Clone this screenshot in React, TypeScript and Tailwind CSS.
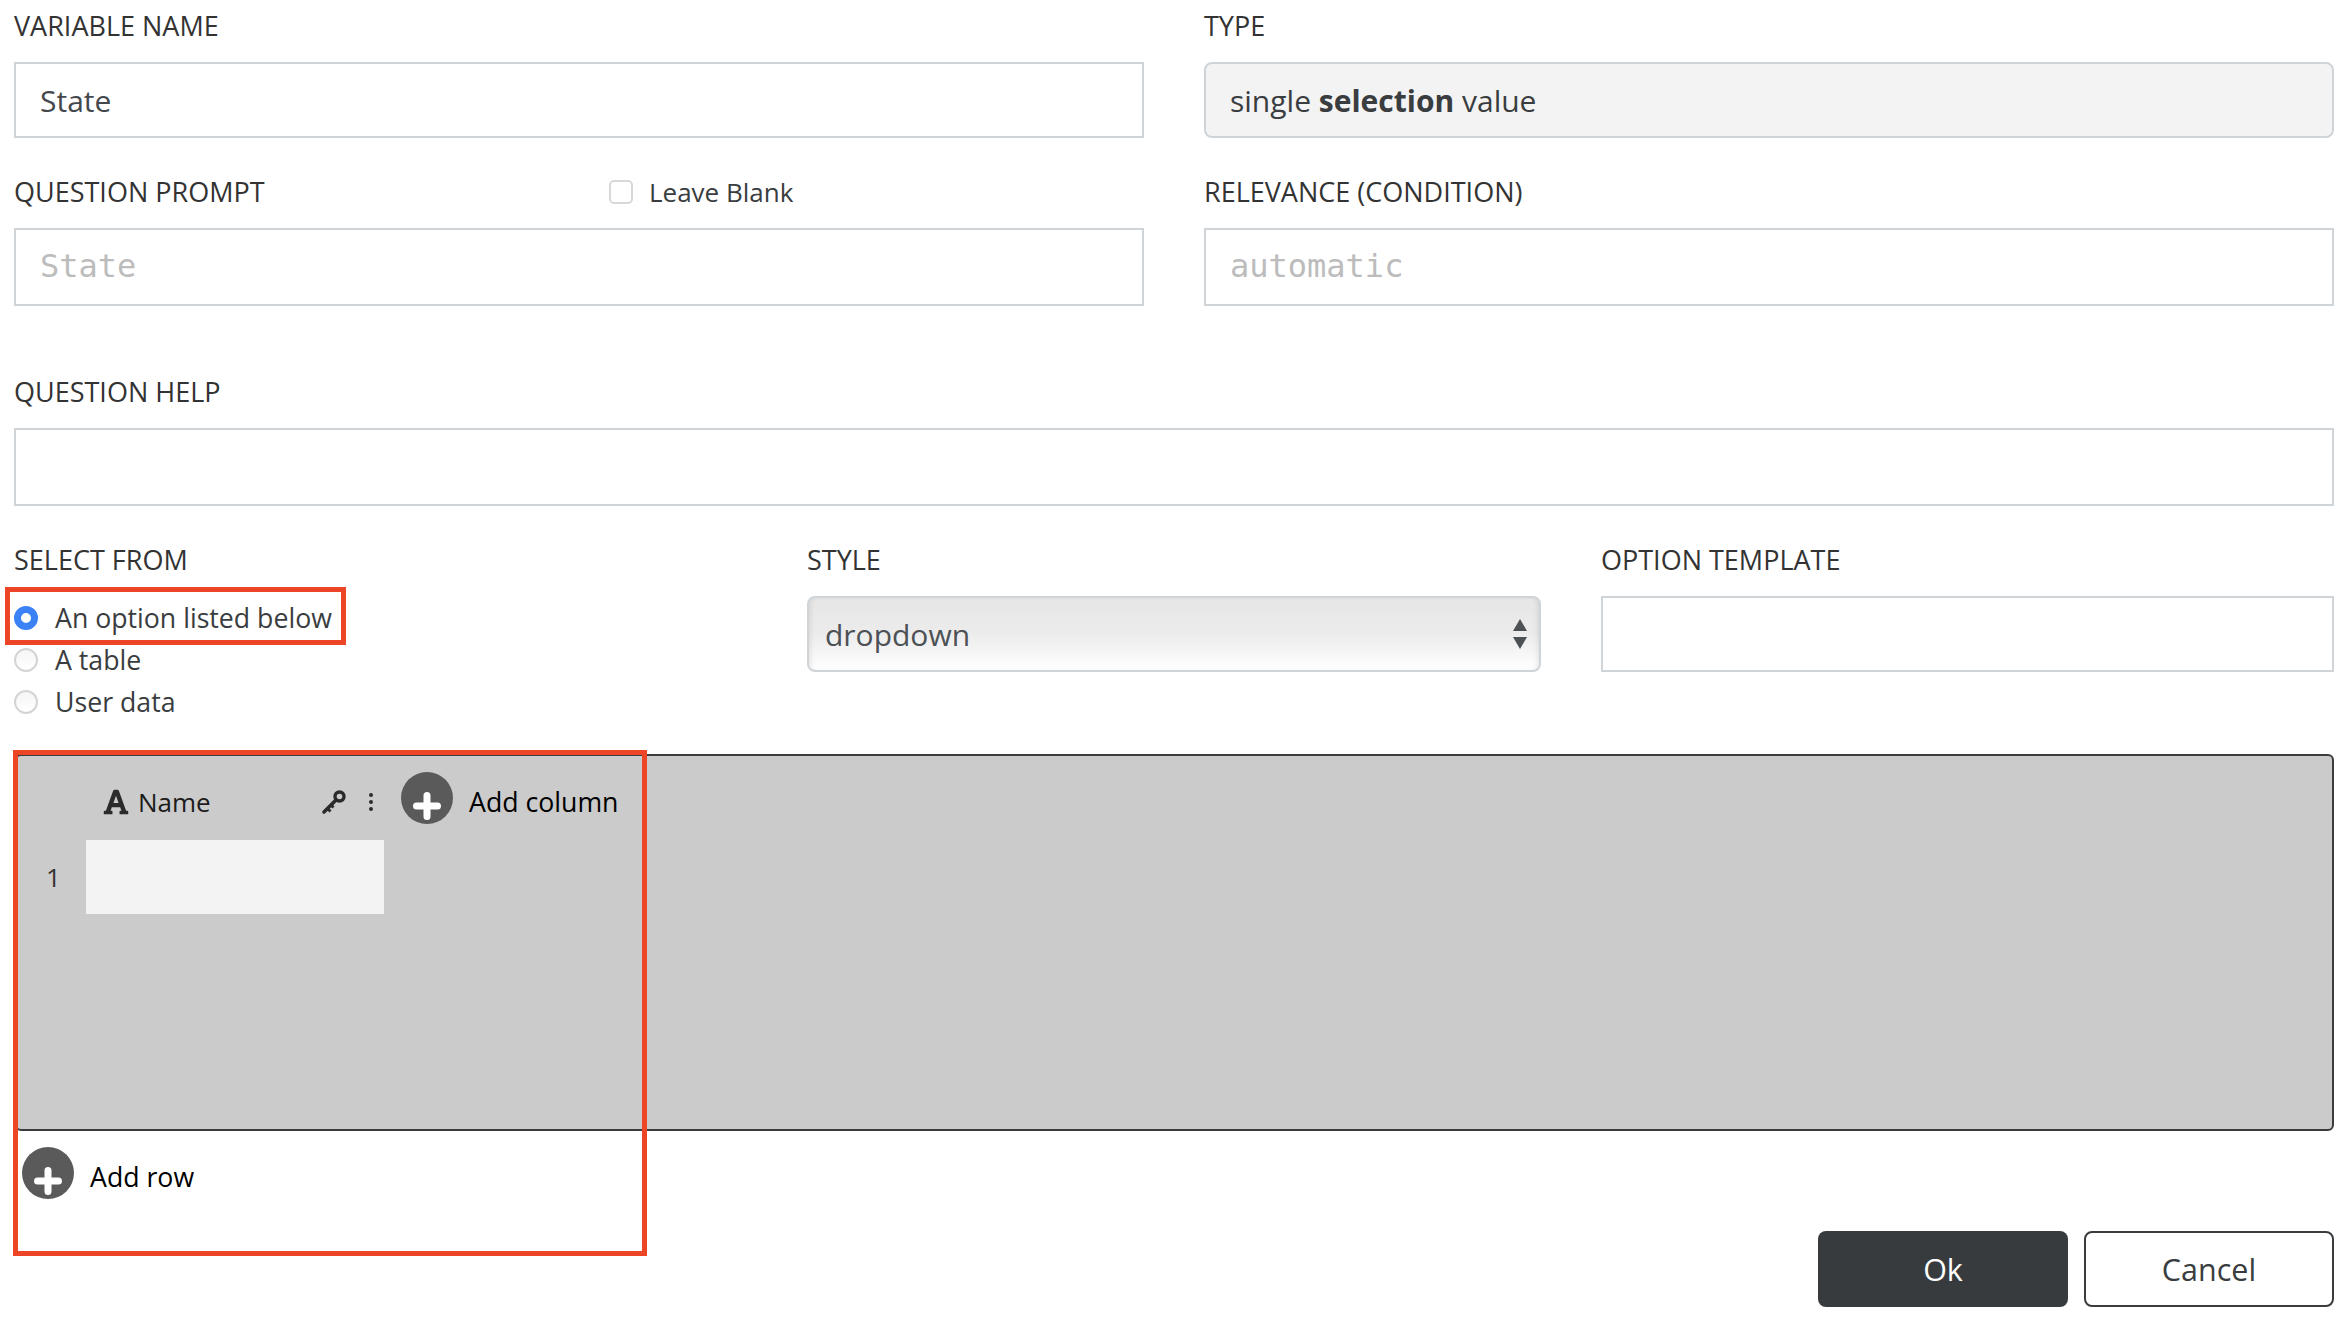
import { FaFont } from "react-icons/fa";

const font = { fontFamily: '"Open Sans", "Noto Sans", sans-serif' };

const labelClass = "h-[36px] text-[27px] leading-[36px] text-[#333] whitespace-nowrap";
const inputClass = "block h-[76px] border-2 border-[#cfd4d8] px-[24px] text-[30px] leading-[74px] text-[#44484c] whitespace-nowrap";
const monoClass = "block h-[78px] border-2 border-[#cfd4d8] px-[24px] text-[32px] leading-[73px] text-[#bcbcbc] whitespace-nowrap font-['DejaVu_Sans_Mono',monospace]";

function PlusCircle() {
  return (
    <svg width="52" height="52" viewBox="0 0 52 52" className="shrink-0">
      <circle cx="26" cy="26" r="26" fill="#5a5a5a" />
      <path d="M26 23.5v21M15.5 34h21" stroke="#fff" strokeWidth="7" strokeLinecap="round" />
    </svg>
  );
}

function Radio({ on, label }: { on?: boolean; label: string }) {
  return (
    <div className="flex h-[42px] items-center">
      {on ? (
        <span className="ml-[4px] h-[24px] w-[24px] rounded-full border-[7px] border-[#3b82f6] bg-white" />
      ) : (
        <span className="ml-[4px] h-[24px] w-[24px] rounded-full border-2 border-[#d4d4d4] bg-gradient-to-b from-[#f6f6f6] to-white" />
      )}
      <span className="ml-[17px] text-[26.7px] leading-[42px] text-[#3a3d40] whitespace-nowrap">{label}</span>
    </div>
  );
}

export default function App() {
  return (
    <div className="relative h-[1322px] w-[2344px] overflow-hidden bg-white pl-[14px] pr-[10px] pt-[8px]" style={font}>
      <div className="flex gap-[60px]">
        <div className="w-[1130px]">
          <div className={labelClass}>VARIABLE NAME</div>
          <div className="mt-[18px]">
            <div className={inputClass}>State</div>
          </div>
          <div className="mt-[36px] flex h-[36px] items-center">
            <span className="w-[595px] text-[27px] leading-[36px] text-[#333] whitespace-nowrap">QUESTION PROMPT</span>
            <span className="h-[24px] w-[24px] rounded-[5px] border-2 border-[#d8d8d8] bg-white" />
            <span className="ml-[16px] text-[26px] leading-[36px] text-[#3a3d40] whitespace-nowrap">Leave Blank</span>
          </div>
          <div className="mt-[18px]">
            <div className={monoClass}>State</div>
          </div>
        </div>
        <div className="w-[1130px]">
          <div className={labelClass}>TYPE</div>
          <div className="mt-[18px]">
            <div className="block h-[76px] rounded-[8px] border-2 border-[#cfd4d8] bg-[#f3f3f3] px-[24px] text-[30px] leading-[74px] text-[#3a3d40] whitespace-nowrap">
              single <b className="font-bold">selection</b> value
            </div>
          </div>
          <div className={"mt-[36px] " + labelClass}>RELEVANCE (CONDITION)</div>
          <div className="mt-[18px]">
            <div className={monoClass}>automatic</div>
          </div>
        </div>
      </div>

      <div className={"mt-[68px] " + labelClass}>QUESTION HELP</div>
      <div className="mt-[18px] h-[78px] border-2 border-[#cfd4d8]" />

      <div className="mt-[36px] flex">
        <div className="w-[793px]">
          <div className={labelClass}>SELECT FROM</div>
          <div className="mt-[19px] flex flex-col -ml-[4px]">
            <Radio on label="An option listed below" />
            <Radio label="A table" />
            <Radio label="User data" />
          </div>
        </div>
        <div className="w-[734px]">
          <div className={labelClass}>STYLE</div>
          <div className="mt-[18px] flex h-[76px] items-center justify-between rounded-[8px] border-2 border-[#cfd4d8] bg-gradient-to-b from-[#e6e6e6] via-[#ececec] to-white pl-[16px] pr-[11px] shadow-[inset_4px_0_4px_-2px_rgba(0,0,0,0.08),inset_-4px_0_4px_-2px_rgba(0,0,0,0.08)]">
            <span className="text-[30px] text-[#4d5156]">dropdown</span>
            <svg width="16" height="30" viewBox="0 0 16 30">
              <path d="M8 0l7 12H1zM1 18h14l-7 12z" fill="#4d5156" />
            </svg>
          </div>
        </div>
        <div className="ml-[60px] w-[733px]">
          <div className={labelClass}>OPTION TEMPLATE</div>
          <div className="mt-[18px] h-[76px] border-2 border-[#cfd4d8]" />
        </div>
      </div>

      <div className="mt-[31px] ml-[1px] h-[377px] rounded-[6px] border-2 border-[#3a3d40] bg-[#cbcbcb] pl-[29px] pt-[20px]">
        <div className="flex h-[52px] items-center">
          <FaFont className="ml-[56px] h-[28px] w-[28px] text-[#2b2b2b]" />
          <span className="ml-[8px] w-[183px] text-[26px] text-[#1c1c1c]">Name</span>
          <svg width="26" height="26" viewBox="0 0 26 26" fill="none" stroke="#2b2b2b">
            <circle cx="18.5" cy="7.5" r="4.5" strokeWidth="3.4" />
            <path d="M15 11L3 23" strokeWidth="3.6" strokeLinecap="round" />
            <path d="M6.5 19.5l3 3M10 16l2.5 2.5" strokeWidth="3" />
          </svg>
          <svg width="6" height="20" viewBox="0 0 6 20" className="ml-[21px]" fill="#2b2b2b">
            <circle cx="3" cy="3" r="2" />
            <circle cx="3" cy="10" r="2" />
            <circle cx="3" cy="17" r="2" />
          </svg>
          <span className="ml-[27px] -mt-[8px]"><PlusCircle /></span>
          <span className="ml-[16px] mt-[1px] text-[26.7px] text-black whitespace-nowrap">Add column</span>
        </div>
        <div className="mt-[12px] flex h-[74px] items-center">
          <span className="w-[40px] text-[26px] text-[#333]">1</span>
          <div className="h-[74px] w-[298px] bg-[#f3f3f3]" />
        </div>
      </div>

      <div className="mt-[16px] ml-[8px] flex h-[52px] items-center">
        <PlusCircle />
        <span className="ml-[16px] mt-[8px] text-[26.7px] text-black">Add row</span>
      </div>

      <div className="mt-[32px] flex justify-end gap-[16px]">
        <div className="flex h-[76px] w-[250px] items-center justify-center rounded-[8px] bg-[#373b3e] pt-[2px] text-[30.5px] text-white">Ok</div>
        <div className="flex h-[76px] w-[250px] items-center justify-center rounded-[8px] border-2 border-[#3a3d40] bg-white pt-[2px] text-[30.5px] text-[#3a3d40]">Cancel</div>
      </div>

      <div className="absolute left-[5px] top-[587px] h-[58px] w-[341px] border-[5px] border-[#ee4526]" />
      <div className="absolute left-[13px] top-[750px] h-[506px] w-[634px] border-[5px] border-[#ee4526]" />
    </div>
  );
}
